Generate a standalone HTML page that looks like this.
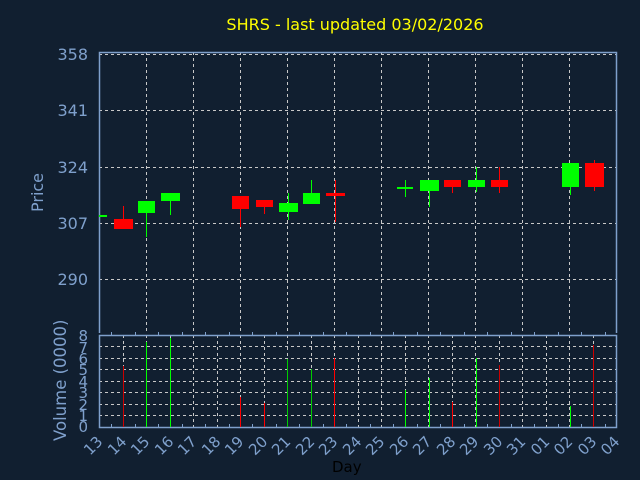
<!DOCTYPE html>
<html><head><style>
html,body{margin:0;padding:0;background:#111f30;}
svg{display:block;font-family:"DejaVu Sans","Liberation Sans",sans-serif;}
</style></head><body>
<svg width="640" height="480" xmlns="http://www.w3.org/2000/svg">
<rect width="640" height="480" fill="#111f30"/>
<text x="355" y="30" fill="#ffff00" font-size="16" text-anchor="middle">SHRS - last updated 03/02/2026</text>
<g stroke="#c8c8c8" stroke-dasharray="3,3" stroke-width="1">
<line x1="99" y1="54.5" x2="617" y2="54.5"/>
<line x1="99" y1="110.5" x2="617" y2="110.5"/>
<line x1="99" y1="167.5" x2="617" y2="167.5"/>
<line x1="99" y1="223.5" x2="617" y2="223.5"/>
<line x1="99" y1="279.5" x2="617" y2="279.5"/>
<line x1="146.5" y1="52" x2="146.5" y2="333"/>
<line x1="193.5" y1="52" x2="193.5" y2="333"/>
<line x1="240.5" y1="52" x2="240.5" y2="333"/>
<line x1="287.5" y1="52" x2="287.5" y2="333"/>
<line x1="334.5" y1="52" x2="334.5" y2="333"/>
<line x1="381.5" y1="52" x2="381.5" y2="333"/>
<line x1="428.5" y1="52" x2="428.5" y2="333"/>
<line x1="475.5" y1="52" x2="475.5" y2="333"/>
<line x1="522.5" y1="52" x2="522.5" y2="333"/>
<line x1="569.5" y1="52" x2="569.5" y2="333"/>
<line x1="99" y1="346.5" x2="617" y2="346.5"/>
<line x1="99" y1="358.5" x2="617" y2="358.5"/>
<line x1="99" y1="369.5" x2="617" y2="369.5"/>
<line x1="99" y1="381.5" x2="617" y2="381.5"/>
<line x1="99" y1="392.5" x2="617" y2="392.5"/>
<line x1="99" y1="404.5" x2="617" y2="404.5"/>
<line x1="99" y1="415.5" x2="617" y2="415.5"/>
<line x1="123.5" y1="335" x2="123.5" y2="427"/><line x1="146.5" y1="335" x2="146.5" y2="427"/><line x1="170.5" y1="335" x2="170.5" y2="427"/><line x1="193.5" y1="335" x2="193.5" y2="427"/><line x1="217.5" y1="335" x2="217.5" y2="427"/><line x1="240.5" y1="335" x2="240.5" y2="427"/><line x1="264.5" y1="335" x2="264.5" y2="427"/><line x1="287.5" y1="335" x2="287.5" y2="427"/><line x1="311.5" y1="335" x2="311.5" y2="427"/><line x1="334.5" y1="335" x2="334.5" y2="427"/><line x1="358.5" y1="335" x2="358.5" y2="427"/><line x1="381.5" y1="335" x2="381.5" y2="427"/><line x1="405.5" y1="335" x2="405.5" y2="427"/><line x1="428.5" y1="335" x2="428.5" y2="427"/><line x1="452.5" y1="335" x2="452.5" y2="427"/><line x1="475.5" y1="335" x2="475.5" y2="427"/><line x1="499.5" y1="335" x2="499.5" y2="427"/><line x1="522.5" y1="335" x2="522.5" y2="427"/><line x1="546.5" y1="335" x2="546.5" y2="427"/><line x1="569.5" y1="335" x2="569.5" y2="427"/><line x1="593.5" y1="335" x2="593.5" y2="427"/>
</g>
<g stroke="#7fa0cc" stroke-width="1.5" fill="none">
<path d="M99.5 333 V52.5 H616.5 V333"/>
<path d="M99.5 335.5 H616.5 V427.5 H99.5 Z"/>
</g>
<g stroke="#7fa0cc" stroke-width="1">
<path d="M111.5 335v-3M135.5 335v-3M158.5 335v-3M182.5 335v-3M205.5 335v-3M229.5 335v-3M252.5 335v-3M276.5 335v-3M299.5 335v-3M323.5 335v-3M346.5 335v-3M370.5 335v-3M393.5 335v-3M417.5 335v-3M440.5 335v-3M464.5 335v-3M487.5 335v-3M511.5 335v-3M534.5 335v-3M558.5 335v-3M581.5 335v-3M605.5 335v-3"/>
<path d="M111.5 427v-3M135.5 427v-3M158.5 427v-3M182.5 427v-3M205.5 427v-3M229.5 427v-3M252.5 427v-3M276.5 427v-3M299.5 427v-3M323.5 427v-3M346.5 427v-3M370.5 427v-3M393.5 427v-3M417.5 427v-3M440.5 427v-3M464.5 427v-3M487.5 427v-3M511.5 427v-3M534.5 427v-3M558.5 427v-3M581.5 427v-3M605.5 427v-3"/>
</g>
<g fill="#7fa0cc" font-size="16" text-anchor="end">
<text x="88" y="60">358</text><text x="88" y="116">341</text><text x="88" y="173">324</text><text x="88" y="229">307</text><text x="88" y="285">290</text>
</g>
<g fill="#7fa0cc" font-size="15" text-anchor="end">
<text x="88" y="341">8</text><text x="88" y="353">7</text><text x="88" y="364">6</text><text x="88" y="375">5</text><text x="88" y="387">4</text><text x="88" y="398">3</text><text x="88" y="410">2</text><text x="88" y="421">1</text><text x="88" y="432">0</text>
</g>
<text transform="translate(43,212) rotate(-90)" fill="#7fa0cc" font-size="16">Price</text>
<text transform="translate(66,441) rotate(-90)" fill="#7fa0cc" font-size="16.5">Volume (0000)</text>
<g fill="#7fa0cc" font-size="15">
<text transform="translate(90,456) rotate(-45)">13</text><text transform="translate(114,456) rotate(-45)">14</text><text transform="translate(137,456) rotate(-45)">15</text><text transform="translate(161,456) rotate(-45)">16</text><text transform="translate(184,456) rotate(-45)">17</text><text transform="translate(208,456) rotate(-45)">18</text><text transform="translate(231,456) rotate(-45)">19</text><text transform="translate(255,456) rotate(-45)">20</text><text transform="translate(278,456) rotate(-45)">21</text><text transform="translate(302,456) rotate(-45)">22</text><text transform="translate(325,456) rotate(-45)">23</text><text transform="translate(349,456) rotate(-45)">24</text><text transform="translate(372,456) rotate(-45)">25</text><text transform="translate(396,456) rotate(-45)">26</text><text transform="translate(419,456) rotate(-45)">27</text><text transform="translate(443,456) rotate(-45)">28</text><text transform="translate(466,456) rotate(-45)">29</text><text transform="translate(490,456) rotate(-45)">30</text><text transform="translate(513,456) rotate(-45)">31</text><text transform="translate(537,456) rotate(-45)">01</text><text transform="translate(560,456) rotate(-45)">02</text><text transform="translate(584,456) rotate(-45)">03</text><text transform="translate(607,456) rotate(-45)">04</text>
</g>
<text x="332" y="472" fill="#000" font-size="15">Day</text>
<g stroke-width="1">
<line x1="123.5" y1="206" x2="123.5" y2="229" stroke="#f00"/><rect x="114" y="219" width="19" height="10" fill="#f00"/>
<rect x="99" y="215" width="8" height="2" fill="#0f0"/>
<line x1="146.5" y1="201" x2="146.5" y2="237" stroke="#0f0"/><rect x="138" y="201" width="17" height="12" fill="#0f0"/>
<line x1="170.5" y1="193" x2="170.5" y2="215" stroke="#0f0"/><rect x="161" y="193" width="19" height="8" fill="#0f0"/>
<line x1="240.5" y1="196" x2="240.5" y2="227" stroke="#f00"/><rect x="232" y="196" width="17" height="13" fill="#f00"/>
<line x1="264.5" y1="200" x2="264.5" y2="214" stroke="#f00"/><rect x="256" y="200" width="17" height="7" fill="#f00"/>
<line x1="288.5" y1="193" x2="288.5" y2="220" stroke="#0f0"/><rect x="279" y="203" width="19" height="9" fill="#0f0"/>
<line x1="311.5" y1="180" x2="311.5" y2="204" stroke="#0f0"/><rect x="303" y="193" width="17" height="11" fill="#0f0"/>
<line x1="335.5" y1="180" x2="335.5" y2="222" stroke="#f00"/><rect x="326" y="193" width="19" height="3" fill="#f00"/>
<line x1="405.5" y1="180" x2="405.5" y2="197" stroke="#0f0"/><rect x="397" y="187" width="16" height="2" fill="#0f0"/>
<line x1="429.5" y1="180" x2="429.5" y2="207" stroke="#0f0"/><rect x="420" y="180" width="19" height="11" fill="#0f0"/>
<line x1="452.5" y1="180" x2="452.5" y2="193" stroke="#f00"/><rect x="444" y="180" width="17" height="7" fill="#f00"/>
<line x1="476.5" y1="167" x2="476.5" y2="192" stroke="#0f0"/><rect x="468" y="180" width="17" height="7" fill="#0f0"/>
<line x1="499.5" y1="167" x2="499.5" y2="193" stroke="#f00"/><rect x="491" y="180" width="17" height="7" fill="#f00"/>
<line x1="570.5" y1="163" x2="570.5" y2="195" stroke="#0f0"/><rect x="562" y="163" width="17" height="24" fill="#0f0"/>
<line x1="594.5" y1="160" x2="594.5" y2="191" stroke="#f00"/><rect x="585" y="163" width="19" height="24" fill="#f00"/>
</g>
<g stroke-width="1">
<line x1="123.5" y1="366" x2="123.5" y2="427" stroke="#c00"/>
<line x1="146.5" y1="342" x2="146.5" y2="427" stroke="#0f0"/>
<line x1="170.5" y1="338" x2="170.5" y2="427" stroke="#0f0"/>
<line x1="240.5" y1="397" x2="240.5" y2="427" stroke="#f00"/>
<line x1="264.5" y1="403" x2="264.5" y2="427" stroke="#f00"/>
<line x1="287.5" y1="359" x2="287.5" y2="427" stroke="#0c0"/>
<line x1="311.5" y1="369" x2="311.5" y2="427" stroke="#0c0"/>
<line x1="334.5" y1="358" x2="334.5" y2="427" stroke="#f00"/>
<line x1="405.5" y1="390" x2="405.5" y2="427" stroke="#0f0"/>
<line x1="429.5" y1="378" x2="429.5" y2="427" stroke="#0f0"/>
<line x1="452.5" y1="402" x2="452.5" y2="427" stroke="#f00"/>
<line x1="476.5" y1="358" x2="476.5" y2="427" stroke="#0f0"/>
<line x1="499.5" y1="365" x2="499.5" y2="427" stroke="#c00"/>
<line x1="570.5" y1="406" x2="570.5" y2="427" stroke="#0f0"/>
<line x1="593.5" y1="345" x2="593.5" y2="427" stroke="#c00"/>
</g>
</svg>
</body></html>
